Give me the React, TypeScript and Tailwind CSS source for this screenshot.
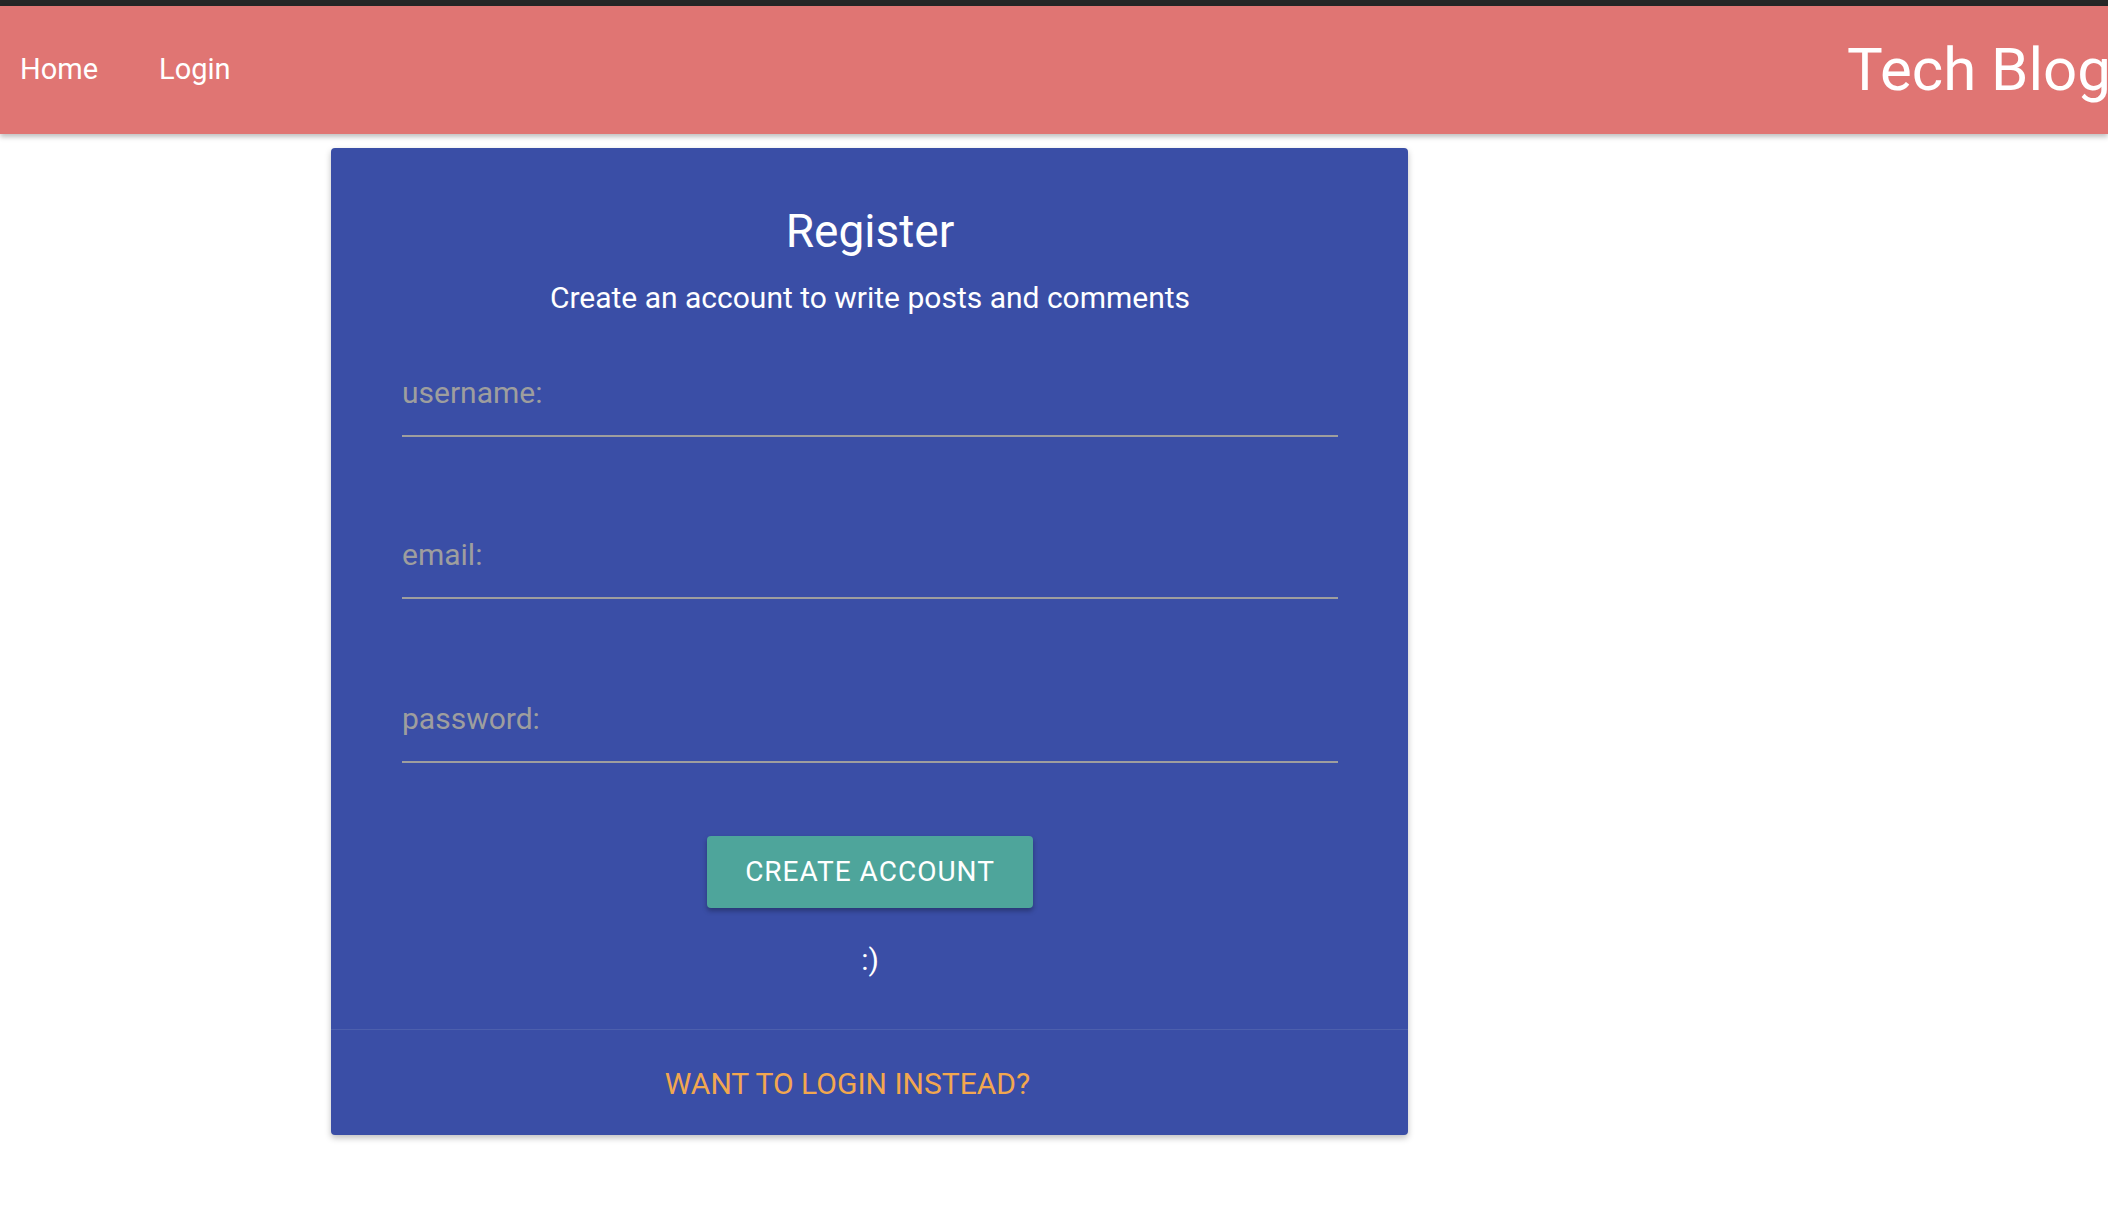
export default function App() {
  return (
    <div className="min-h-[1220px] w-full overflow-hidden bg-white" style={{ fontFamily: "Roboto, 'Liberation Sans', sans-serif" }}>
      {/* top window strip */}
      <div className="h-[6px] bg-[#262626]" />

      {/* Navbar */}
      <nav className="relative z-10 flex h-[128px] items-center justify-between overflow-hidden bg-[#e07573] text-white shadow-[0_3px_5px_rgba(0,0,0,0.25)]">
        <ul className="flex items-center">
          <li className="pl-[20px] text-[29px]">Home</li>
          <li className="ml-[61px] text-[29px]">Login</li>
        </ul>
        <div className="mr-[-3px] whitespace-nowrap text-[60px] leading-none">Tech Blog</div>
      </nav>

      {/* Register card */}
      <div className="ml-[331px] mt-[14px] w-[1077px] rounded-[4px] bg-[#3a4ea6] text-white shadow-[0_3px_6px_rgba(0,0,0,0.25)]">
        <div className="flex flex-col items-center pl-[71px] pr-[70px] pt-[55px]">
          <h1 className="text-[46px] leading-[56px]">Register</h1>
          <p className="mt-[21px] text-[30px] leading-[36px]">Create an account to write posts and comments</p>

          <div className="mt-[59px] w-full">
            <div className="h-[60px] text-[30px] leading-[36px] text-[#9e9e9e]">username:</div>
            <div className="h-[2px] bg-[#9e9e9e]" />
          </div>
          <div className="mt-[100px] w-full">
            <div className="h-[60px] text-[30px] leading-[36px] text-[#9e9e9e]">email:</div>
            <div className="h-[2px] bg-[#9e9e9e]" />
          </div>
          <div className="mt-[102px] w-full">
            <div className="h-[60px] text-[30px] leading-[36px] text-[#9e9e9e]">password:</div>
            <div className="h-[2px] bg-[#9e9e9e]" />
          </div>

          <button className="mt-[73px] flex h-[72px] w-[326px] items-center justify-center rounded-[4px] bg-[#4ea59b] text-[28px] tracking-[1px] text-white shadow-[0_3px_5px_rgba(0,0,0,0.3)]">
            CREATE ACCOUNT
          </button>
          <div className="mt-[34px] text-[30px] leading-[36px]">:)</div>
        </div>

        <div className="mt-[51px] border-t border-[#4c5fad] pb-[33px] pt-[36px] text-center">
          <span className="mr-[44px] text-[30px] leading-[36px] text-[#f2a74f]">WANT TO LOGIN INSTEAD?</span>
        </div>
      </div>
    </div>
  );
}
